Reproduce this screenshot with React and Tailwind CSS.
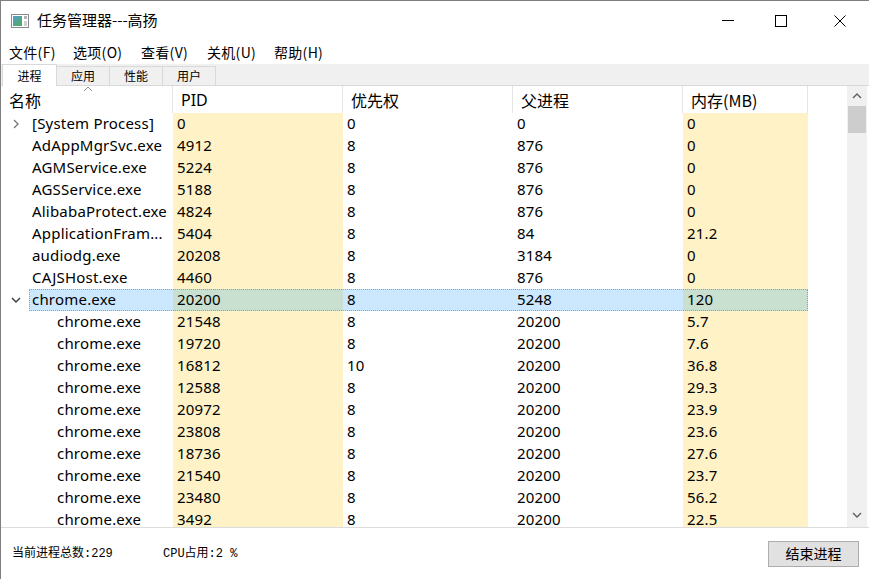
import React from 'react'

const ui = { fontFamily: '"Noto Sans", "Noto Sans CJK SC", sans-serif' }
const cjk = { fontFamily: '"Noto Sans CJK SC", "Noto Sans", sans-serif' }
const mono = { fontFamily: '"Liberation Mono", "Noto Sans CJK SC", monospace' }

const rows = [
  { name: '[System Process]', pid: '0', pri: '0', ppid: '0', mem: '0', arrow: 'right' },
  { name: 'AdAppMgrSvc.exe', pid: '4912', pri: '8', ppid: '876', mem: '0' },
  { name: 'AGMService.exe', pid: '5224', pri: '8', ppid: '876', mem: '0' },
  { name: 'AGSService.exe', pid: '5188', pri: '8', ppid: '876', mem: '0' },
  { name: 'AlibabaProtect.exe', pid: '4824', pri: '8', ppid: '876', mem: '0' },
  { name: 'ApplicationFram...', pid: '5404', pri: '8', ppid: '84', mem: '21.2' },
  { name: 'audiodg.exe', pid: '20208', pri: '8', ppid: '3184', mem: '0' },
  { name: 'CAJSHost.exe', pid: '4460', pri: '8', ppid: '876', mem: '0' },
  { name: 'chrome.exe', pid: '20200', pri: '8', ppid: '5248', mem: '120', arrow: 'down', selected: true },
  { name: 'chrome.exe', pid: '21548', pri: '8', ppid: '20200', mem: '5.7', child: true },
  { name: 'chrome.exe', pid: '19720', pri: '8', ppid: '20200', mem: '7.6', child: true },
  { name: 'chrome.exe', pid: '16812', pri: '10', ppid: '20200', mem: '36.8', child: true },
  { name: 'chrome.exe', pid: '12588', pri: '8', ppid: '20200', mem: '29.3', child: true },
  { name: 'chrome.exe', pid: '20972', pri: '8', ppid: '20200', mem: '23.9', child: true },
  { name: 'chrome.exe', pid: '23808', pri: '8', ppid: '20200', mem: '23.6', child: true },
  { name: 'chrome.exe', pid: '18736', pri: '8', ppid: '20200', mem: '27.6', child: true },
  { name: 'chrome.exe', pid: '21540', pri: '8', ppid: '20200', mem: '23.7', child: true },
  { name: 'chrome.exe', pid: '23480', pri: '8', ppid: '20200', mem: '56.2', child: true },
  { name: 'chrome.exe', pid: '3492', pri: '8', ppid: '20200', mem: '22.5', child: true },
]

const Chevron = ({ dir }) => (
  <svg width="10" height="10" viewBox="0 0 10 10" className="shrink-0">
    {dir === 'right'
      ? <path d="M3 1 L7 5 L3 9" fill="none" stroke="#7a7a7a" strokeWidth="1.4" />
      : <path d="M1 3 L5 7 L9 3" fill="none" stroke="#3a3a3a" strokeWidth="1.4" />}
  </svg>
)

const Row = ({ r }) => {
  const plain = r.selected ? 'bg-[#cce8ff]' : ''
  const cream = r.selected ? 'bg-[#c9dfd0]' : 'bg-[#fff2c6]'
  return (
    <div className="relative flex h-[22px] text-[15px] leading-[21px] text-black tracking-[0.2px]" style={ui}>
      <div className="w-[172px] shrink-0 flex items-center">
        <div className="w-[28px] shrink-0 flex justify-center pl-[2px]">
          {r.arrow && <Chevron dir={r.arrow} />}
        </div>
        <div className={`flex-1 h-full whitespace-nowrap overflow-hidden ${plain} ${r.child ? 'pl-[28px]' : 'pl-[3px]'}`}>{r.name}</div>
      </div>
      <div className={`w-[170px] shrink-0 pl-[4px] ${cream}`}>{r.pid}</div>
      <div className={`w-[170px] shrink-0 pl-[4px] ${plain}`}>{r.pri}</div>
      <div className={`w-[170px] shrink-0 pl-[4px] ${plain}`}>{r.ppid}</div>
      <div className={`w-[125px] shrink-0 pl-[4px] ${cream}`}>{r.mem}</div>
      {r.selected && (
        <div className="absolute left-[28px] top-0 w-[779px] h-[22px] border border-dotted border-[#e88a3c]" />
      )}
    </div>
  )
}

const HeaderCell = ({ w, children }) => (
  <div className={`${w} shrink-0 h-full flex items-center pl-[8px] text-[16px] text-black border-r border-[#e5e5e5]`} style={cjk}>
    {children}
  </div>
)

const App = () => {
  return (
    <div className="w-[869px] h-[579px] bg-white flex flex-col overflow-hidden border-l border-t border-[#7f7f7f]" style={cjk}>
      <div className="h-[39px] shrink-0 flex items-center">
        <svg width="18" height="14" viewBox="0 0 18 14" className="ml-[10px]">
          <rect x="0.5" y="0.5" width="17" height="13" fill="#fff" stroke="#8a8a8a" />
          <defs>
            <linearGradient id="g" x1="0" y1="0" x2="1" y2="1">
              <stop offset="0" stopColor="#5b9bd5" />
              <stop offset="1" stopColor="#4caf50" />
            </linearGradient>
          </defs>
          <rect x="2" y="2" width="9" height="10" fill="url(#g)" />
          <rect x="13" y="2" width="3" height="3" fill="#b0b0b0" />
          <rect x="13" y="7" width="3" height="5" fill="#d0d0d0" />
        </svg>
        <div className="ml-[8px] text-[15px] text-black">任务管理器---高扬</div>
        <div className="ml-auto flex h-full">
          <div className="w-[46px] h-full flex items-center justify-center">
            <div className="w-[12px] h-px bg-black" />
          </div>
          <div className="w-[60px] h-full flex items-center justify-center">
            <div className="w-[12px] h-[12px] border border-black" />
          </div>
          <div className="w-[58px] h-full flex items-center justify-center">
            <svg width="12" height="12" viewBox="0 0 12 12">
              <path d="M0.5 0.5 L11.5 11.5 M11.5 0.5 L0.5 11.5" stroke="#000" strokeWidth="1" />
            </svg>
          </div>
        </div>
      </div>

      <div className="h-[24px] shrink-0 flex items-center text-[14px] text-black pl-[8px] tracking-[0.3px]">
        <span className="w-[64px]">文件(F)</span>
        <span className="w-[68px]">选项(O)</span>
        <span className="w-[66px]">查看(V)</span>
        <span className="w-[67px]">关机(U)</span>
        <span>帮助(H)</span>
      </div>

      <div className="h-[22px] shrink-0 bg-[#f0f0f0] flex items-end pl-[1px] border-b border-[#d9d9d9] text-[12px] text-black">
        <div className="w-[55px] h-[22px] bg-white border border-b-0 border-[#d9d9d9] flex items-center justify-center -mb-px">进程</div>
        <div className="w-[53px] h-[19px] border border-l-0 border-b-0 border-[#d9d9d9] flex items-center justify-center">应用</div>
        <div className="w-[53px] h-[19px] border border-l-0 border-b-0 border-[#d9d9d9] flex items-center justify-center">性能</div>
        <div className="w-[53px] h-[19px] border border-l-0 border-b-0 border-[#d9d9d9] flex items-center justify-center">用户</div>
      </div>

      <div className="flex-1 flex border-b border-[#dcdcdc] overflow-hidden">
        <div className="flex-1 flex flex-col overflow-hidden">
          <div className="relative h-[27px] shrink-0 flex">
            <HeaderCell w="w-[172px]">名称</HeaderCell>
            <HeaderCell w="w-[170px]"><span style={ui}>PID</span></HeaderCell>
            <HeaderCell w="w-[170px]">优先权</HeaderCell>
            <HeaderCell w="w-[170px]">父进程</HeaderCell>
            <HeaderCell w="w-[125px]">内存(MB)</HeaderCell>
            <svg width="10" height="6" viewBox="0 0 10 6" className="absolute left-[82px] top-[0px]">
              <path d="M1 5 L5 1 L9 5" fill="none" stroke="#8a8a8a" strokeWidth="1" />
            </svg>
          </div>
          <div className="flex-1 overflow-hidden">
            {rows.map((r, i) => <Row key={i} r={r} />)}
          </div>
        </div>
        <div className="w-[20px] shrink-0 mr-[2px] bg-[#f0f0f0] flex flex-col">
          <div className="h-[20px] flex items-center justify-center">
            <svg width="10" height="6" viewBox="0 0 10 6"><path d="M1 5 L5 1 L9 5" fill="none" stroke="#606060" strokeWidth="1.4" /></svg>
          </div>
          <div className="mx-[1px] h-[27px] bg-[#cdcdcd]" />
          <div className="flex-1" />
          <div className="h-[20px] flex items-center justify-center mb-[2px]">
            <svg width="10" height="6" viewBox="0 0 10 6"><path d="M1 1 L5 5 L9 1" fill="none" stroke="#606060" strokeWidth="1.4" /></svg>
          </div>
        </div>
      </div>

      <div className="h-[51px] shrink-0 flex items-center text-[12px] text-black">
        <div className="ml-[11px] w-[151px]" style={mono}>当前进程总数:229</div>
        <div style={mono}>CPU占用:2 %</div>
        <button className="ml-auto mr-[10px] w-[91px] h-[26px] bg-[#e1e1e1] border border-[#adadad] text-[14px] text-black" style={cjk}>结束进程</button>
      </div>
    </div>
  )
}

export default App
